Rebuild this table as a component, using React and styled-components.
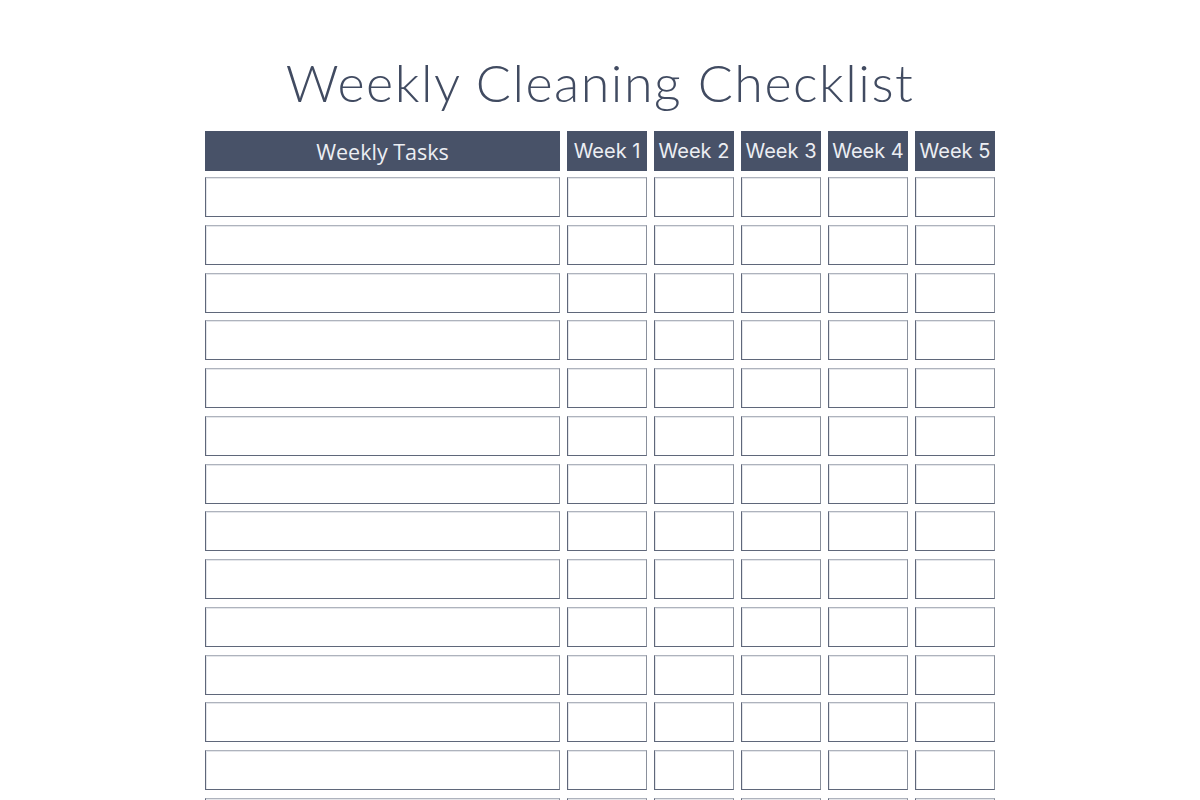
import React from 'react'
import styled, {createGlobalStyle} from 'styled-components'

const GlobalStyle = createGlobalStyle`
  html, body {
    margin: 0;
    padding: 0;
    background: #ffffff;
  }
  body {
    font-family: "Lato", "Liberation Sans", sans-serif;
  }
`

const Page = styled.div`
  display: flex;
  flex-direction: column;
  align-items: center;
  padding-top: 52px;
`

const Title = styled.h1`
  margin: 0 0 19px 0;
  font-family: "Lato", sans-serif;
  font-weight: 300;
  font-size: 52px;
  line-height: 60px;
  letter-spacing: 1.5px;
  color: #414b61;
`

const Table = styled.div`
  display: flex;
  flex-direction: column;
  gap: 6px;
`

const Grid = styled.div`
  display: grid;
  grid-template-columns: 355px repeat(5, 80px);
  grid-auto-rows: 40px;
  column-gap: 7px;
  row-gap: 7.75px;
`

const HeadCell = styled.div`
  display: flex;
  align-items: center;
  justify-content: center;
  background: #485268;
  color: #eceef3;
  font-family: ${props => props.$wide ? '"Open Sans", sans-serif' : '"Inter", sans-serif'};
  font-size: ${props => props.$wide ? '21.5px' : '20px'};
  white-space: nowrap;
`

const Box = styled.div`
  box-sizing: border-box;
  border-style: solid;
  border-width: 1px;
  border-color: #aeb3bd #8a909c #5f677a #5f677a;
  box-shadow: inset 1px 1px 0 #e4e6ea;
  background: #ffffff;
`

const weeks = ['Week 1', 'Week 2', 'Week 3', 'Week 4', 'Week 5']
const rows = Array.from({length: 14}, (_, i) => i)

function App() {
  return (
    <>
      <GlobalStyle />
      <Page>
        <Title>Weekly Cleaning Checklist</Title>
        <Table>
          <Grid>
            <HeadCell $wide>Weekly Tasks</HeadCell>
            {weeks.map(w => <HeadCell key={w}>{w}</HeadCell>)}
          </Grid>
          <Grid>
            {rows.map(r => (
              <React.Fragment key={r}>
                <Box />
                {weeks.map(w => <Box key={w} />)}
              </React.Fragment>
            ))}
          </Grid>
        </Table>
      </Page>
    </>
  )
}

export default App
